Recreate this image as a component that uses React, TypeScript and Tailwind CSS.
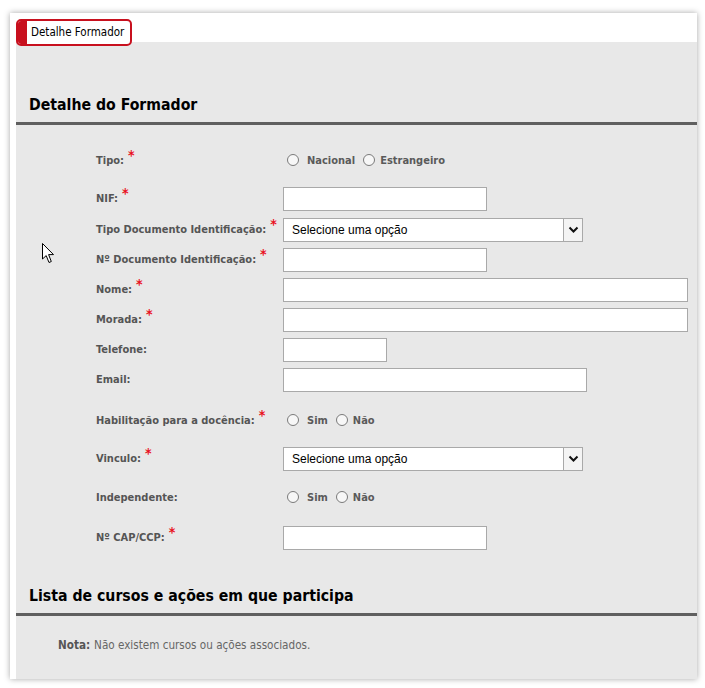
const font = { fontFamily: '"DejaVu Sans Condensed", "DejaVu Sans", sans-serif' };

const Req = () => (
  <span className="relative -top-[4px] ml-[4px] text-[14px] font-bold leading-none text-[#e8101c]">*</span>
);

const Label = ({ text, req }: { text: string; req?: boolean }) => (
  <div className="w-[187px] shrink-0 text-[11px] font-bold text-[#555555]">
    {text}
    {req && <Req />}
  </div>
);

const TextBox = ({ w }: { w: string }) => (
  <div className={`h-[24px] ${w} border border-[#a9a9a9] bg-white`} />
);

const Select = () => (
  <div className="flex h-[24px] w-[300px] items-center border border-[#a9a9a9] bg-white">
    <span
      className="flex-1 pl-[8px] text-[12px] text-black"
      style={{ fontFamily: '"Liberation Sans", Arial, sans-serif' }}
    >
      Selecione uma opção
    </span>
    <span className="flex h-full w-[19px] items-center justify-center border-l border-[#a9a9a9] bg-[#f4f4f4]">
      <svg width="11" height="8" viewBox="0 0 11 8">
        <polyline points="1.5,1.5 5.5,5.5 9.5,1.5" fill="none" stroke="#111" strokeWidth="2" />
      </svg>
    </span>
  </div>
);

const Radio = () => (
  <span className="-mt-[2px] h-[12px] w-[12px] shrink-0 rounded-full border border-[#7a7a7a] bg-[#f7f7f7]" />
);

const RadioPair = ({ a, b }: { a: string; b: string }) => (
  <div className="flex items-center text-[11px] font-bold text-[#5a5a5a]">
    <span className="ml-[4px] flex"><Radio /></span>
    <span className="ml-[8px]">{a}</span>
    <span className="ml-[8px] flex"><Radio /></span>
    <span className="ml-[5px]">{b}</span>
  </div>
);

const Row = ({ children, className = '' }: { children: React.ReactNode; className?: string }) => (
  <div className={`flex h-[30px] items-center ${className}`}>{children}</div>
);

const Heading = ({ text }: { text: string }) => (
  <div>
    <div className="flex h-[36px] items-center pl-[13px] pt-[2px] text-[15.7px] font-bold text-black">{text}</div>
    <div className="h-[3px] bg-[#5f5f5f]" />
  </div>
);

export default function App() {
  return (
    <div className="relative h-[688px] w-[705px] bg-white" style={font}>
      <div className="ml-[10px] pt-[13px]">
        <div className="flex h-[666px] w-[687px] flex-col bg-white pl-[6px] shadow-[0_0_6px_rgba(0,0,0,0.35)]">
          {/* tab strip */}
          <div className="h-[29px] shrink-0">
            <div className="relative z-10 mt-[6px] flex h-[27px] w-[116px] overflow-hidden rounded-[5px] border-2 border-[#c8101e] bg-white">
              <span className="w-[9px] bg-[#c8101e]" />
              <span className="flex items-center pl-[4px] text-[11.5px] text-black">Detalhe Formador</span>
            </div>
          </div>

          <div className="flex-1 bg-[#e8e8e8] pt-[44px]">
            <Heading text="Detalhe do Formador" />

            <div className="pl-[80px] pt-[21px]">
              <Row>
                <Label text="Tipo:" req />
                <RadioPair a="Nacional" b="Estrangeiro" />
              </Row>
              <Row className="mt-[8px]">
                <Label text="NIF:" req />
                <TextBox w="w-[204px]" />
              </Row>
              <Row className="mt-[1px]">
                <Label text="Tipo Documento Identificação:" req />
                <Select />
              </Row>
              <Row>
                <Label text="Nº Documento Identificação:" req />
                <TextBox w="w-[204px]" />
              </Row>
              <Row>
                <Label text="Nome:" req />
                <TextBox w="w-[405px]" />
              </Row>
              <Row>
                <Label text="Morada:" req />
                <TextBox w="w-[405px]" />
              </Row>
              <Row>
                <Label text="Telefone:" />
                <TextBox w="w-[104px]" />
              </Row>
              <Row>
                <Label text="Email:" />
                <TextBox w="w-[304px]" />
              </Row>
              <Row className="mt-[11px]">
                <Label text="Habilitação para a docência:" req />
                <RadioPair a="Sim" b="Não" />
              </Row>
              <Row className="mt-[8px]">
                <Label text="Vinculo:" req />
                <Select />
              </Row>
              <Row className="mt-[9px]">
                <Label text="Independente:" />
                <RadioPair a="Sim" b="Não" />
              </Row>
              <Row className="mt-[10px]">
                <Label text="Nº CAP/CCP:" req />
                <TextBox w="w-[204px]" />
              </Row>
            </div>

            <div className="mt-[24px]">
              <Heading text="Lista de cursos e ações em que participa" />
            </div>

            <div className="mt-[20px] flex h-[20px] items-center pl-[42px] text-[11.6px] text-[#666666]">
              <span className="font-bold text-[#555555]">Nota:</span>
              <span className="ml-[4px]">Não existem cursos ou ações associados.</span>
            </div>
          </div>
        </div>
      </div>

      {/* mouse pointer */}
      <svg className="absolute left-[42px] top-[243px]" width="13" height="21" viewBox="0 0 13 21">
        <path d="M0.5,0.5 L0.5,16 L4.2,12.6 L7,19.5 L9.3,18.5 L6.6,11.6 L11.5,11.6 Z" fill="#fff" stroke="#000" strokeWidth="1" />
      </svg>
    </div>
  );
}
